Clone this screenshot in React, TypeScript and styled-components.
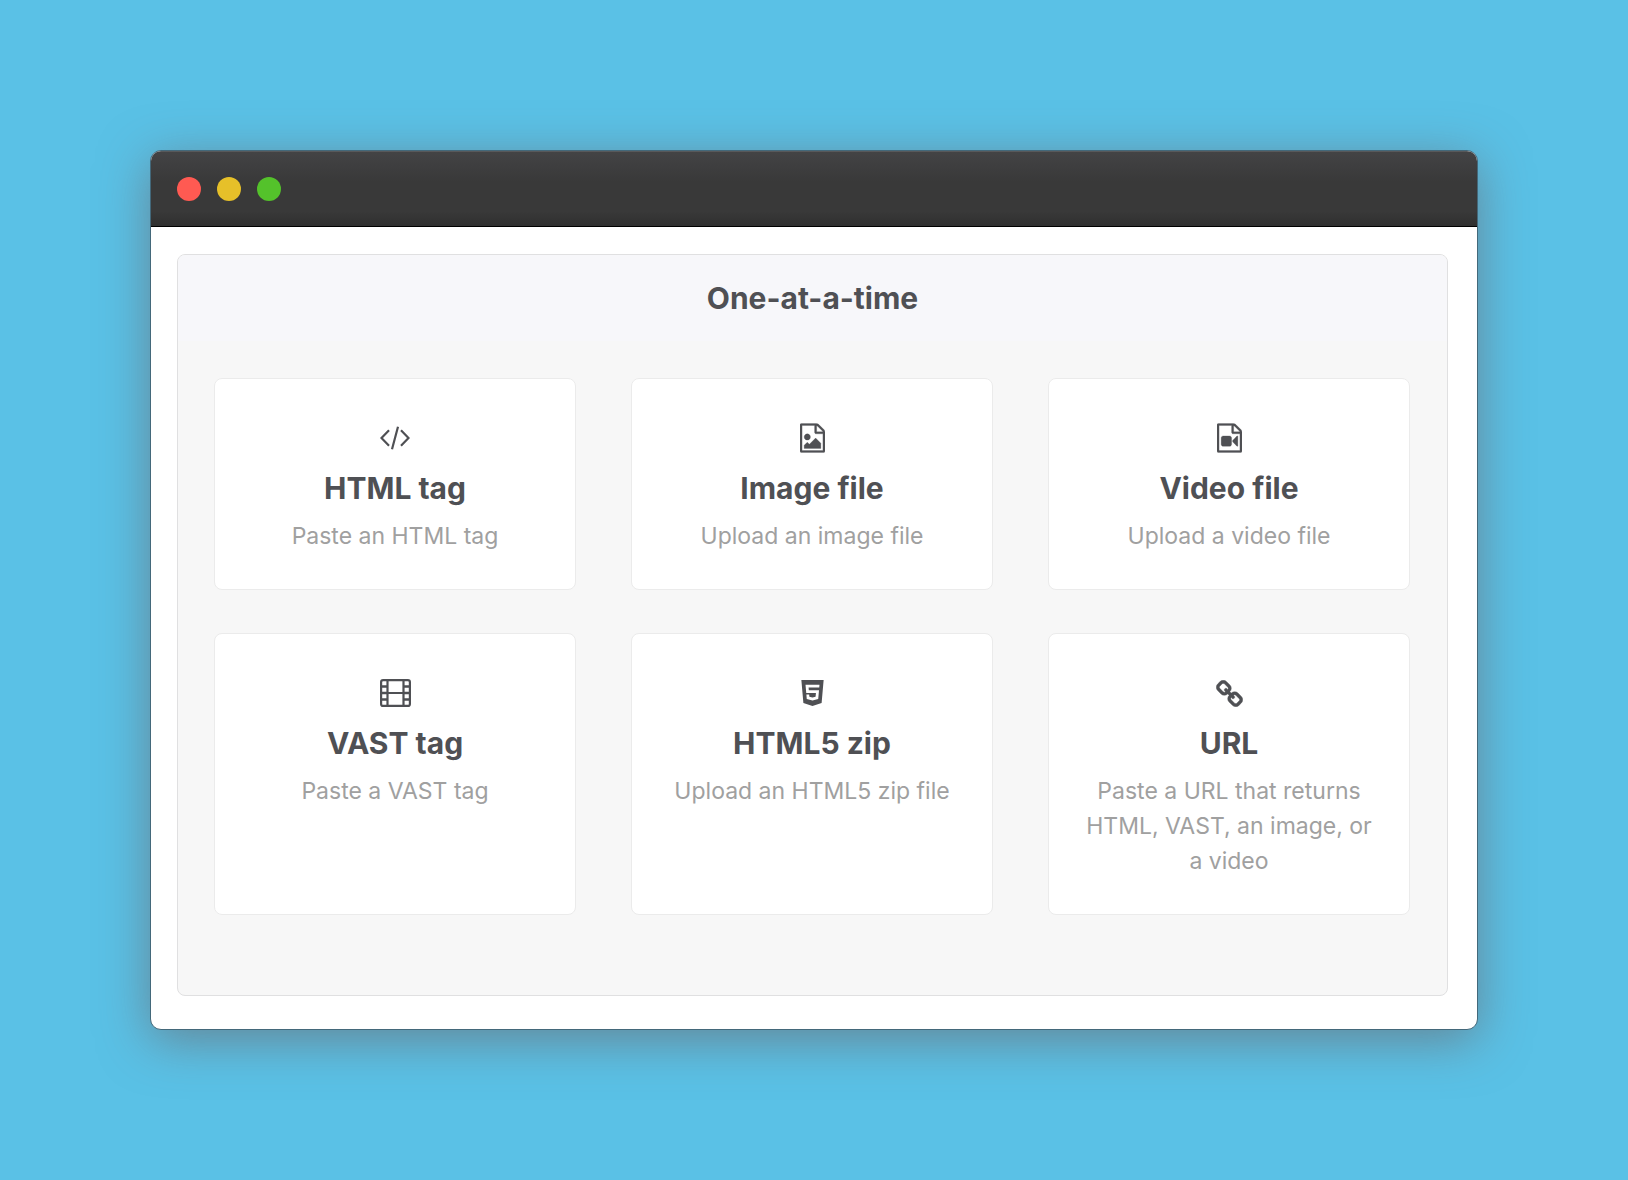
import React from "react";
import styled, { createGlobalStyle } from "styled-components";

const GlobalStyle = createGlobalStyle`
  *, *::before, *::after { box-sizing: border-box; }
  body {
    margin: 0;
    background: #5ac1e6;
    color: #4f5054;
    font-family: Inter, "Liberation Sans", sans-serif;
  }
`;

const Page = styled.div`
  min-height: 100vh;
  padding: 150px;
`;

const Window = styled.main`
  border: 1px solid #43687a;
  border-radius: 11px;
  overflow: hidden;
  background: #fff;
  box-shadow: 0 10px 50px rgba(109, 86, 86, 0.56);
`;

const TitleBar = styled.header`
  display: flex;
  align-items: center;
  gap: 16px;
  height: 76px;
  padding: 0 26px;
  background: linear-gradient(#434345, #393939 40%, #393939 80%, #2f2f2f);
  border-top: 1px solid #58595b;
  border-bottom: 1px solid #000;
`;

const Light = styled.button<{ $color: string }>`
  width: 24px;
  height: 24px;
  padding: 0;
  border: 0;
  border-radius: 50%;
  background: ${({ $color }) => $color};
`;

const Content = styled.div`
  padding: 27px 29px 33px 26px;
`;

const Panel = styled.section`
  border: 1px solid #e0e0e1;
  border-radius: 8px;
  overflow: hidden;
  background: #f7f7f7;
`;

const PanelHeader = styled.div`
  display: flex;
  align-items: center;
  justify-content: center;
  height: 86px;
  background: #f7f7fa;
`;

const Heading = styled.h1`
  margin: 0;
  font-size: 30px;
  font-weight: 700;
  line-height: 42px;
`;

const Grid = styled.div`
  display: grid;
  grid-template-columns: repeat(3, 1fr);
  gap: 43px 55px;
  padding: 37px 37px 80px 36px;
`;

const Card = styled.button`
  display: flex;
  flex-direction: column;
  align-items: center;
  padding: 44px 36px 35px;
  border: 1px solid #ebebeb;
  border-radius: 8px;
  background: #fff;
  color: inherit;
  font-family: inherit;
  text-align: center;
  cursor: pointer;
`;

const IconSlot = styled.span`
  display: flex;
  align-items: center;
  justify-content: center;
  height: 30px;
  margin-bottom: 14px;
`;

const CardTitle = styled.span`
  margin-bottom: 10px;
  font-size: 30px;
  font-weight: 700;
  line-height: 42px;
`;

const CardText = styled.span`
  color: #a0a0a0;
  font-size: 23px;
  line-height: 35px;
`;

const CodeIcon = () => (
  <svg width="30" height="24" viewBox="0 0 30 24" fill="none" stroke="currentColor" strokeWidth="2.2" aria-hidden="true">
    <path d="M9 4.2 1.5 12 9 19.8M18 .8l-6 22.4M21 4.2l7.5 7.8-7.5 7.8" />
  </svg>
);

const FILE =
  "M1468 380q28 28 48 76t20 88v1152q0 40-28 68t-68 28h-1344q-40 0-68-28t-28-68v-1600q0-40 28-68t68-28h896q40 0 88 20t76 48zm-444-244v376h376q-10-29-22-41l-313-313q-12-12-41-22zm384 1528v-1024h-416q-40 0-68-28t-28-68v-416h-768v1536h1280z";

const FileIcon = ({ inner }: { inner: string }) => (
  <svg
    width="25"
    height="30"
    viewBox="0 0 1536 1792"
    fill="currentColor"
    stroke="currentColor"
    strokeWidth="16"
    aria-hidden="true"
  >
    <path d={FILE + inner} />
  </svg>
);

const FilmIcon = () => (
  <svg width="31" height="28" viewBox="0 0 31 28" fill="none" stroke="currentColor" strokeWidth="2.2" aria-hidden="true">
    <rect x="1.1" y="1.1" width="28.8" height="25.8" rx="2" />
    <path d="M7.5 1v26M23.5 1v26M7.5 14h16" />
    <path d="M1 7.5h6.5M1 14h6.5M1 20.5h6.5M23.5 7.5H30M23.5 14H30M23.5 20.5H30" strokeWidth="2.6" />
  </svg>
);

const Html5Icon = () => (
  <svg width="23" height="26" viewBox="0 32 384 448" fill="currentColor" aria-hidden="true">
    <path d="M0 32l34.9 395.8L191.5 480l157.6-52.2L384 32H0zm308.2 127.9H124.4l4.1 49.4h175.6l-13.6 148.4-97.9 27v.3h-1.1l-98.7-27.3-6-75.8h47.7L138 320l53.5 14.5 53.7-14.5 6-62.2H84.3L71.5 112.2h241.1l-4.4 47.7z" />
  </svg>
);

const LinkIcon = () => (
  <svg
    width="27"
    height="27"
    viewBox="0 0 1664 1664"
    fill="currentColor"
    stroke="currentColor"
    strokeWidth="24"
    aria-hidden="true"
  >
    <path d="M1456 1216q0-40-28-68l-208-208q-28-28-68-28-42 0-72 32 3 3 19 18.5t21.5 21.5 15 19 13 25.5 3.5 27.5q0 40-28 68t-68 28q-15 0-27.5-3.5t-25.5-13-19-15-21.5-21.5-18.5-19q-33 31-33 73 0 40 28 68l206 207q27 27 68 27 40 0 68-26l147-146q28-28 28-67zm-703-705q0-40-28-68l-206-207q-28-28-68-28-39 0-68 27l-147 146q-28 28-28 67 0 40 28 68l208 208q27 27 68 27 42 0 72-31-3-3-19-18.5t-21.5-21.5-15-19-13-25.5-3.5-27.5q0-40 28-68t68-28q15 0 27.5 3.5t25.5 13 19 15 21.5 21.5 18.5 19q33-31 33-73zm895 705q0 120-85 203l-147 146q-83 83-203 83-121 0-204-85l-206-207q-83-83-83-203 0-123 88-209l-88-88q-86 88-208 88-120 0-204-84l-208-208q-84-84-84-204t85-203l147-146q83-83 203-83 121 0 204 85l206 207q83 83 83 203 0 123-88 209l88 88q86-88 208-88 120 0 204 84l208 208q84 84 84 204z" />
  </svg>
);

const IMAGE_INNER =
  "m-128-448v320h-1024v-192l192-192 128 128 384-384zm-832-192q-80 0-136-56t-56-136 56-136 136-56 136 56 56 136-56 136-136 56z";
const VIDEO_INNER =
  "m-640-896q52 0 90 38t38 90v384q0 52-38 90t-90 38h-384q-52 0-90-38t-38-90v-384q0-52 38-90t90-38h384zm492 2q20 8 20 30v576q0 22-20 30-8 2-12 2-14 0-23-9l-265-266v-90l265-266q9-9 23-9 4 0 12 2z";

const options = [
  { title: "HTML tag", text: "Paste an HTML tag", icon: <CodeIcon /> },
  { title: "Image file", text: "Upload an image file", icon: <FileIcon inner={IMAGE_INNER} /> },
  { title: "Video file", text: "Upload a video file", icon: <FileIcon inner={VIDEO_INNER} /> },
  { title: "VAST tag", text: "Paste a VAST tag", icon: <FilmIcon /> },
  { title: "HTML5 zip", text: "Upload an HTML5 zip file", icon: <Html5Icon /> },
  { title: "URL", text: "Paste a URL that returns HTML, VAST, an image, or a video", icon: <LinkIcon /> },
];

export default function App() {
  return (
    <Page>
      <GlobalStyle />
      <Window>
        <TitleBar>
          <Light $color="#ff5a52" aria-label="Close" />
          <Light $color="#e6c029" aria-label="Minimize" />
          <Light $color="#54c22b" aria-label="Zoom" />
        </TitleBar>
        <Content>
          <Panel>
            <PanelHeader>
              <Heading>One-at-a-time</Heading>
            </PanelHeader>
            <Grid>
              {options.map((o) => (
                <Card key={o.title} type="button">
                  <IconSlot>{o.icon}</IconSlot>
                  <CardTitle>{o.title}</CardTitle>
                  <CardText>{o.text}</CardText>
                </Card>
              ))}
            </Grid>
          </Panel>
        </Content>
      </Window>
    </Page>
  );
}
